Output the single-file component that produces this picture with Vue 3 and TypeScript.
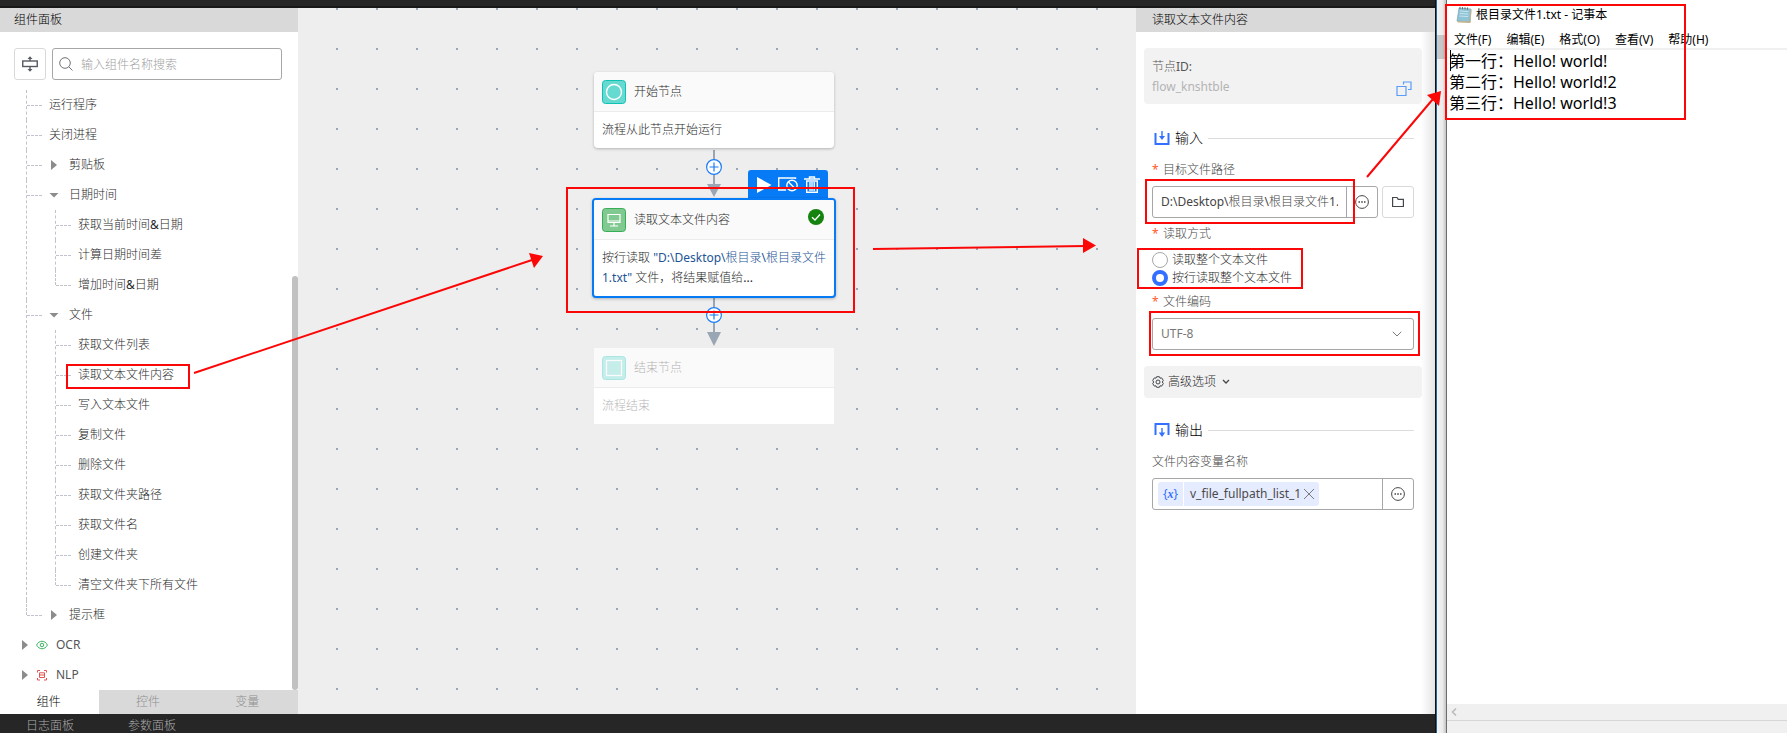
<script setup lang="ts">
import { ref } from 'vue'

interface TreeNode {
  label: string
  open?: boolean
  group?: boolean
  children?: string[]
}

const tree: TreeNode[] = [
  { label: '运行程序' },
  { label: '关闭进程' },
  { label: '剪贴板', group: true },
  { label: '日期时间', group: true, open: true, children: ['获取当前时间&日期', '计算日期时间差', '增加时间&日期'] },
  {
    label: '文件',
    group: true,
    open: true,
    children: ['获取文件列表', '读取文本文件内容', '写入文本文件', '复制文件', '删除文件', '获取文件夹路径', '获取文件名', '创建文件夹', '清空文件夹下所有文件'],
  },
  { label: '提示框', group: true },
]

const tabs = ['组件', '控件', '变量']
const menus = ['文件(F)', '编辑(E)', '格式(O)', '查看(V)', '帮助(H)']

const search = ref('')
const activeTab = ref('组件')
const filePath = ref('D:\\Desktop\\根目录\\根目录文件1.txt')
const readMode = ref('lines')
const encoding = ref('UTF-8')
const notes = ref('第一行：Hello! world!\n第二行：Hello! world!2\n第三行：Hello! world!3')
</script>

<template>
  <div class="screen">
    <div class="studio">
      <div class="topbar"></div>
      <div class="workspace">
        <aside class="sidebar">
          <h2 class="panel-title">组件面板</h2>
          <div class="search-row">
            <button class="square-btn" aria-label="折叠">
              <svg width="16" height="16" viewBox="0 0 16 16" fill="none" stroke="#555a60">
                <rect x="0.75" y="5" width="14.5" height="5.5" stroke-width="1.4" />
                <path d="M8 5V2M8 10.500V14" stroke-width="1.4" />
                <path d="M5.500 3 8 0.300 10.500 3zM5.500 13 8 15.700 10.500 13z" fill="#555a60" stroke="none" />
              </svg>
            </button>
            <label class="search-box">
              <svg width="14" height="14" viewBox="0 0 14 14" fill="none" stroke="#6f7378">
                <circle cx="6" cy="6" r="5.300" />
                <path d="M9.700 9.700 13.500 13.500" />
              </svg>
              <input v-model="search" type="text" placeholder="输入组件名称搜索" aria-label="输入组件名称搜索" />
            </label>
          </div>
          <div class="tree-scroll">
            <div class="tree-body">
              <ul class="tree">
                <li v-for="node in tree" :key="node.label" class="branch">
                  <button class="tree-item">
                    <span v-if="node.group" class="caret" :class="{ open: node.open }"></span>
                    <span>{{ node.label }}</span>
                  </button>
                  <ul v-if="node.children" class="subtree">
                    <li v-for="child in node.children" :key="child" class="branch">
                      <button class="tree-item">{{ child }}</button>
                    </li>
                  </ul>
                </li>
              </ul>
              <button class="root-item">
                <span class="caret"></span>
                <svg width="12" height="12" viewBox="0 0 12 12" fill="none" stroke="#3bb360">
                  <path d="M0.600 6C3 1 9 1 11.400 6 9 11 3 11 0.600 6z" />
                  <circle cx="6" cy="6" r="1.800" />
                </svg>
                <span>OCR</span>
              </button>
              <button class="root-item">
                <span class="caret"></span>
                <svg width="12" height="12" viewBox="0 0 12 12" fill="none" stroke="#e05555">
                  <path d="M1.500 3.500V1.500H4M8 1.500h2.500v2M10.500 9v2H8M4 11H1.500V9M3.500 3.800h5v4.700h-5zM3.500 6h5" />
                </svg>
                <span>NLP</span>
              </button>
            </div>
            <div class="scroll-thumb"></div>
          </div>
          <nav class="tabs">
            <button v-for="tab in tabs" :key="tab" class="tab" :class="{ active: tab === activeTab }" @click="activeTab = tab">{{ tab }}</button>
          </nav>
        </aside>

        <main class="canvas">
          <svg class="dots" width="100%" height="100%">
            <defs>
              <pattern id="dot-grid" x="38" y="0" width="40" height="40" patternUnits="userSpaceOnUse">
                <rect width="2" height="2" fill="#9ba6b4" />
              </pattern>
            </defs>
            <rect width="100%" height="100%" fill="url(#dot-grid)" />
          </svg>
          <svg class="links" width="24" height="350" viewBox="0 0 24 350" fill="none">
            <path d="M12 142V178M12 290V326" stroke="#9ba6b4" stroke-width="2" />
            <path d="M5 176H19L12 189zM5 324H19L12 338z" fill="#9ba6b4" />
            <g stroke="#1a7cf5" stroke-width="1.200">
              <circle cx="12" cy="159" r="7.400" fill="#fff" />
              <circle cx="12" cy="307" r="7.400" fill="#fff" />
              <path d="M7.500 159h9M12 154.500v9M7.500 307h9M12 302.500v9" />
            </g>
          </svg>

          <article class="node start">
            <header>
              <svg width="24" height="24" viewBox="0 0 24 24" fill="none">
                <rect x="0.500" y="0.500" width="23" height="23" rx="3" fill="#66d9d0" stroke="#10c2b3" />
                <circle cx="12" cy="12" r="7.500" stroke="#fff" stroke-width="1.400" />
              </svg>
              <span>开始节点</span>
            </header>
            <p>流程从此节点开始运行</p>
          </article>

          <div class="node-tools">
            <button aria-label="运行">
              <svg width="16" height="18" viewBox="0 0 16 18"><path d="M1 1 15.500 9 1 17z" fill="#fff" /></svg>
            </button>
            <button aria-label="禁用">
              <svg width="20" height="18" viewBox="0 0 20 18" fill="none" stroke="#fff" stroke-width="1.400">
                <path d="M17.500 3V2H0.700v12H8" />
                <circle cx="14" cy="9.500" r="5.200" />
                <path d="M10.500 6 17.500 13" />
              </svg>
            </button>
            <button aria-label="删除">
              <svg width="16" height="18" viewBox="0 0 16 18" fill="none" stroke="#fff" stroke-width="1.400">
                <path d="M0 3H16M5.500 2.500V1h5v1.500M2.700 5V16.300H13.300V5zM6 6v9M8 6v9M10.200 6v9" />
              </svg>
            </button>
          </div>
          <article class="node selected">
            <header>
              <svg width="24" height="24" viewBox="0 0 24 24" fill="none">
                <rect x="0.500" y="0.500" width="23" height="23" rx="3" fill="#80ca92" stroke="#36ad57" />
                <path d="M6 12h12v3H6z" fill="#bfe5c8" />
                <path d="M6 6.500h12v8H6zM12 15v3M8 18h8" stroke="#fff" stroke-width="1.200" />
              </svg>
              <span>读取文本文件内容</span>
              <svg class="done" width="16" height="16" viewBox="0 0 16 16" fill="none">
                <circle cx="8" cy="8" r="8" fill="#15830f" />
                <path d="M4 8.200 7 11 12 5.500" stroke="#fff" stroke-width="1.300" />
              </svg>
            </header>
            <p>按行读取 <em>"D:\Desktop\根目录\根目录文件1.txt"</em> 文件，将结果赋值给...</p>
          </article>

          <article class="node end">
            <header>
              <svg width="24" height="24" viewBox="0 0 24 24" fill="none">
                <rect x="0.500" y="0.500" width="23" height="23" rx="3" fill="#66d9d0" stroke="#10c2b3" />
                <rect x="4.500" y="4.500" width="15" height="15" stroke="#fff" stroke-width="1.200" />
              </svg>
              <span>结束节点</span>
            </header>
            <p>流程结束</p>
          </article>
        </main>

        <aside class="props">
          <h2 class="panel-title">读取文本文件内容</h2>
          <div class="props-body">
            <section class="id-card">
              <div>
                <div class="id-label">节点ID:</div>
                <div class="id-value">flow_knshtble</div>
              </div>
              <button class="copy" aria-label="复制">
                <svg width="16" height="16" viewBox="0 0 16 16" fill="none" stroke="#5b9bfa" stroke-width="1.200">
                  <path d="M1 5.500h9v9H1zM7.500 3.500V1H15v7.500h-3" />
                </svg>
              </button>
            </section>

            <h3 class="section-title">
              <svg width="16" height="16" viewBox="0 0 16 16" fill="none" stroke="#3370ff" stroke-width="2">
                <path d="M1.500 3V14H14.500V3" />
                <path d="M8 1V7" stroke-width="1.400" />
                <path d="M5 6H11L8 10z" fill="#3370ff" stroke="none" />
              </svg>
              <span>输入</span>
            </h3>

            <label class="field-label req" for="path">目标文件路径</label>
            <div class="path-row">
              <div class="combo">
                <input id="path" v-model="filePath" type="text" />
                <button aria-label="更多">
                  <svg width="14" height="14" viewBox="0 0 14 14" fill="none" stroke="#44484c">
                    <circle cx="7" cy="7" r="6.400" /><path d="M3.500 7h1.500M6.200 7h1.600M9 7h1.500" stroke-width="1.500" />
                  </svg>
                </button>
              </div>
              <button class="square-btn" aria-label="选择文件">
                <svg width="12" height="12" viewBox="0 0 12 12" fill="none" stroke="#44484c" stroke-width="1.200">
                  <path d="M0.600 10.500V1.500H5L6.200 3.300H11.400V10.500z" />
                </svg>
              </button>
            </div>

            <div id="mode-label" class="field-label req">读取方式</div>
            <div class="radios" role="radiogroup" aria-labelledby="mode-label">
              <label><input v-model="readMode" type="radio" name="mode" value="all" />读取整个文本文件</label>
              <label><input v-model="readMode" type="radio" name="mode" value="lines" />按行读取整个文本文件</label>
            </div>

            <label class="field-label req enc" for="encoding">文件编码</label>
            <div class="select-box">
              <select id="encoding" v-model="encoding">
                <option>UTF-8</option>
                <option>GBK</option>
              </select>
              <svg width="10" height="6" viewBox="0 0 10 6" fill="none" stroke="#777b80"><path d="M0.800 0.800 5 5 9.200 0.800" /></svg>
            </div>

            <button class="advanced">
              <svg width="12" height="12" viewBox="0 0 12 12" fill="none" stroke="#44484c">
                <path d="M4.600 0.700h2.800L8 2.200 9.700 1.900 11.300 4.400 10.300 6 11.300 7.600 9.700 10.100 8 9.800 7.400 11.300H4.600L4 9.800 2.300 10.100 0.700 7.600 1.700 6 0.700 4.400 2.300 1.900 4 2.200z" />
                <circle cx="6" cy="6" r="2" />
              </svg>
              <span>高级选项</span>
              <svg width="8" height="6" viewBox="0 0 8 6" fill="none" stroke="#44484c" stroke-width="1.300"><path d="M1 1 4 4 7 1" /></svg>
            </button>

            <h3 class="section-title">
              <svg width="16" height="16" viewBox="0 0 16 16" fill="none" stroke="#3370ff" stroke-width="2">
                <path d="M1.500 13V2H14.500V13" />
                <path d="M8 6V12" stroke-width="1.400" />
                <path d="M4.800 10.500H11.200L8 15z" fill="#3370ff" stroke="none" />
              </svg>
              <span>输出</span>
            </h3>

            <div class="field-label">文件内容变量名称</div>
            <div class="combo output">
              <div class="tag-area">
                <span class="tag-kind">{<i>x</i>}</span>
                <span class="tag">v_file_fullpath_list_1
                  <button aria-label="移除">
                    <svg width="12" height="12" viewBox="0 0 12 12" stroke="#777b80"><path d="M1 1 11 11M11 1 1 11" /></svg>
                  </button>
                </span>
              </div>
              <button aria-label="更多">
                <svg width="14" height="14" viewBox="0 0 14 14" fill="none" stroke="#44484c">
                  <circle cx="7" cy="7" r="6.400" /><path d="M3.500 7h1.500M6.200 7h1.600M9 7h1.500" stroke-width="1.500" />
                </svg>
              </button>
            </div>
          </div>
        </aside>
      </div>
      <footer class="bottombar">
        <button>日志面板</button>
        <button>参数面板</button>
      </footer>
    </div>

    <div class="gutter"><span></span></div>

    <section class="notepad">
      <header class="note-title">
        <svg width="16" height="18" viewBox="0 0 16 18">
          <path d="M3 2 15 3 14 16 1 15z" fill="#8fc3d6" stroke="#6b9aab" stroke-width="0.600" />
          <path d="M14.500 3 15.500 4 14.500 17 2 16.500 1 15 13.500 15.500z" fill="#c9b28a" />
          <path d="M4 5 12.500 5.600M3.700 7.500 12.300 8.100M3.500 10 12 10.600" stroke="#c7e5ef" />
          <path d="M4 0.800V3M6.500 1V3.200M9 1.200V3.400M11.500 1.400V3.600" stroke="#4a5a60" stroke-width="0.800" />
        </svg>
        <h1>根目录文件1.txt - 记事本</h1>
      </header>
      <nav class="note-menu">
        <button v-for="item in menus" :key="item">{{ item }}</button>
      </nav>
      <div class="note-body">
        <textarea v-model="notes" aria-label="文本内容" spellcheck="false"></textarea>
        <span class="text-cursor"></span>
      </div>
      <div class="note-scroll">
        <svg width="6" height="8" viewBox="0 0 6 8" fill="none" stroke="#b9b9b9" stroke-width="1.500"><path d="M5 0.500 1.500 4 5 7.500" /></svg>
      </div>
      <div class="note-status"></div>
    </section>

    <svg class="marks" width="1787" height="733" viewBox="0 0 1787 733" fill="none" stroke="#fb0707" stroke-width="2">
      <rect x="67" y="365" width="122" height="23" />
      <rect x="567" y="188" width="287" height="124" />
      <rect x="1146" y="180" width="208" height="43" />
      <rect x="1138" y="249" width="164" height="39" />
      <rect x="1150" y="312" width="269" height="43" />
      <rect x="1446" y="5" width="239" height="114" />
      <path d="M194 373 532 260M873 249 1086 246M1367 177 1433 99" />
      <g fill="#fb0707" stroke="none">
        <path d="M543 256 529 253 534 268z" />
        <path d="M1096 245.500 1083 238 1083 253z" />
        <path d="M1441 91 1427 95 1439 106z" />
      </g>
    </svg>
  </div>
</template>

<style>
body {
  margin: 0;
  overflow: hidden;
}
</style>

<style scoped>
.screen {
  position: relative;
  display: flex;
  height: 100vh;
  overflow: hidden;
  background: #fff;
  color: #2a2a2a;
  font: 12px/20px "Noto Sans", "Noto Sans CJK SC Light", "Noto Sans CJK SC", sans-serif;
}
.screen *,
.screen *::before,
.screen *::after {
  box-sizing: border-box;
}
h1, h2, h3, p, ul {
  margin: 0;
  padding: 0;
  font-weight: 400;
}
ul {
  list-style: none;
}
button, input, select, textarea {
  margin: 0;
  padding: 0;
  border: 0;
  background: none;
  color: inherit;
  font: inherit;
  outline: none;
}
svg {
  display: block;
  flex: none;
}

.studio {
  flex: 1;
  min-width: 0;
  display: flex;
  flex-direction: column;
  border-right: 1px solid #111;
}
.topbar {
  height: 8px;
  background: #262626;
  border-bottom: 2px solid #181818;
}
.workspace {
  flex: 1;
  min-height: 0;
  display: flex;
}
.panel-title {
  height: 24px;
  line-height: 24px;
  background: #d9d9d9;
  color: #000;
  font-size: 12px;
}

.sidebar {
  width: 298px;
  display: flex;
  flex-direction: column;
  background: #fff;
}
.sidebar .panel-title {
  padding-left: 14px;
}
.search-row {
  display: flex;
  gap: 6px;
  padding: 16px 16px 0 14px;
}
.square-btn {
  display: flex;
  align-items: center;
  justify-content: center;
  width: 32px;
  height: 32px;
  border: 1px solid #d9d9d9;
  border-radius: 3px;
}
.search-box {
  flex: 1;
  display: flex;
  align-items: center;
  gap: 8px;
  height: 32px;
  padding: 0 6px;
  border: 1px solid #a6a7a9;
  border-radius: 3px;
}
.search-box input {
  flex: 1;
  min-width: 0;
  padding-top: 1px;
}
.search-box input::placeholder {
  color: #a0a0a0;
}
.tree-scroll {
  flex: 1;
  min-height: 0;
  display: flex;
  align-items: flex-end;
  overflow: hidden;
  padding-top: 10px;
}
.tree-body {
  flex: 1;
  align-self: flex-start;
}
.scroll-thumb {
  width: 6px;
  height: 69%;
  border-radius: 3px;
  background: #c1c1c1;
}
.tree {
  padding-left: 26px;
}
.subtree {
  padding-left: 29px;
}
.branch {
  position: relative;
}
.branch::before {
  content: "";
  position: absolute;
  left: 0;
  top: 0;
  bottom: 0;
  border-left: 1px dashed #bfc3ce;
}
.branch:last-child::before {
  bottom: auto;
  height: 15px;
}
.branch::after {
  content: "";
  position: absolute;
  left: 1px;
  top: 15px;
  width: 15px;
  border-top: 1px dashed #bfc3ce;
}
.tree-item,
.root-item {
  display: flex;
  align-items: center;
  width: 100%;
  height: 30px;
  padding-left: 23px;
  text-align: left;
}
.root-item {
  padding-left: 22px;
  color: #555;
}
.root-item svg {
  margin-right: 8px;
}
.caret {
  width: 6px;
  height: 10px;
  margin: 0 12px 0 2px;
  background: #8c8c8c;
  clip-path: polygon(0 0, 100% 50%, 0 100%);
}
.root-item .caret {
  margin: 0 8px 0 0;
}
.caret.open {
  width: 10px;
  height: 5px;
  margin: 0 10px 0 0;
  clip-path: polygon(0 0, 100% 0, 50% 100%);
}
.tabs {
  display: flex;
  height: 24px;
}
.tab {
  flex: 1;
  padding-right: 2px;
  background: #d9d9d9;
  color: #8f8f8f;
}
.tab.active {
  background: #fff;
  color: #000;
}

.canvas {
  position: relative;
  flex: 1;
  min-width: 0;
  overflow: hidden;
  background: #eee;
}
.dots {
  position: absolute;
  inset: 0;
}
.links {
  position: absolute;
  left: 404px;
  top: 0;
}
.node {
  position: absolute;
  left: 296px;
  width: 240px;
  overflow: hidden;
  background: #fff;
  border-radius: 4px;
  box-shadow: 0 1px 3px rgba(0, 0, 0, 0.25);
}
.node header {
  display: flex;
  align-items: center;
  gap: 8px;
  height: 40px;
  padding: 0 8px;
  background: #fafafa;
  border-bottom: 1px solid #ececec;
}
.node p {
  padding: 8px;
}
.start {
  top: 64px;
}
.selected {
  top: 190px;
  left: 294px;
  width: 244px;
  border: 2px solid #077af5;
}
.selected p {
  padding-right: 4px;
}
.selected em {
  color: #1c5494;
  font-style: normal;
}
.done {
  align-self: flex-start;
  margin: 9px 2px 0 auto;
}
.end {
  top: 340px;
  border-radius: 0;
  box-shadow: none;
}
.end header > *,
.end p {
  opacity: 0.35;
}
.node-tools {
  position: absolute;
  left: 450px;
  top: 162px;
  display: flex;
  align-items: center;
  justify-content: space-between;
  width: 80px;
  height: 30px;
  padding: 0 8px;
  border-radius: 3px 3px 0 0;
  background: #077af5;
}

.props {
  display: flex;
  flex-direction: column;
  width: 299px;
  background: linear-gradient(to left, #e4e4e4, #fff 14px);
}
.props .panel-title {
  padding-left: 16px;
}
.props-body {
  padding: 16px 21px 0 16px;
}
.id-card {
  display: flex;
  justify-content: space-between;
  align-items: flex-end;
  margin: 0 -8px 24px;
  padding: 9px 8px 7px;
  border-radius: 4px;
  background: #f2f2f2;
}
.id-label {
  color: #555;
}
.id-value {
  color: #b4b4b4;
}
.copy {
  margin: 0 2px 0 0;
}
.section-title {
  display: flex;
  align-items: center;
  gap: 5px;
  height: 20px;
  padding-left: 2px;
  color: #000;
  font-size: 14px;
}
.section-title::after {
  content: "";
  flex: 1;
  border-top: 1px solid #dcdcdc;
}
.field-label {
  display: block;
  margin: 12px 0 6px;
  color: #484848;
}
.field-label.req::before {
  content: "*";
  display: inline-block;
  width: 11px;
  color: #ff5a2d;
}
.path-row {
  display: flex;
  gap: 4px;
}
.combo {
  flex: 1;
  min-width: 0;
  display: flex;
  height: 32px;
  border: 1px solid #a6a7a9;
  border-radius: 3px;
}
.combo > input {
  flex: 1;
  min-width: 0;
  margin: 0 8px;
  color: #444;
}
.combo > button {
  display: flex;
  align-items: center;
  justify-content: center;
  width: 31px;
  border-left: 1px solid #a6a7a9;
}
.path-row + .field-label {
  margin: 6px 0;
}
.radios {
  padding: 1px 0;
}
.radios label {
  display: flex;
  align-items: center;
  gap: 4px;
  height: 18px;
}
.radios input {
  appearance: none;
  width: 16px;
  height: 16px;
  border: 1px solid #a6a7a9;
  border-radius: 50%;
  background: #fff;
}
.radios input:checked {
  border: 4px solid #3370ff;
}
.field-label.enc {
  margin: 4px 0 6px;
}
.select-box {
  display: flex;
  align-items: center;
  height: 32px;
  padding-right: 11px;
  border: 1px solid #a6a7a9;
  border-radius: 3px;
}
.select-box select {
  flex: 1;
  height: 30px;
  padding-left: 8px;
  appearance: none;
  color: #777;
}
.advanced {
  display: flex;
  align-items: center;
  gap: 4px;
  width: calc(100% + 16px);
  height: 32px;
  margin: 16px -8px 22px;
  padding: 0 8px;
  border-radius: 4px;
  background: #f2f2f2;
}
.advanced svg:last-child {
  margin-left: 2px;
}
.output {
  background: #fff;
}
.tag-area {
  flex: 1;
  display: flex;
  align-items: center;
  gap: 1px;
  padding-left: 5px;
}
.tag-kind,
.tag {
  display: flex;
  align-items: center;
  height: 24px;
  background: #e6ecff;
}
.tag-kind {
  width: 25px;
  justify-content: center;
  border-radius: 3px 0 0 3px;
  color: #3370ff;
}
.tag-kind i {
  font-family: "Liberation Serif", serif;
  font-weight: 700;
}
.tag {
  gap: 2px;
  padding: 0 4px 0 6px;
  border-radius: 0 3px 3px 0;
  color: #4a4a4a;
}

.bottombar {
  height: 19px;
  display: flex;
  align-items: flex-start;
  gap: 54px;
  padding: 2px 0 0 26px;
  overflow: hidden;
  background: #262626;
  color: #aaa;
}

.gutter {
  width: 11px;
  border-left: 1px solid #2b6494;
  border-right: 1px solid #6d6d6d;
  background: linear-gradient(to right, #f2f2f2, #ececec 60%, #c4c4c4);
  padding-top: 35px;
}
.gutter span {
  display: block;
  height: 24px;
  background: rgba(0, 0, 0, 0.16);
}

.notepad {
  width: 340px;
  display: flex;
  flex-direction: column;
  color: #000;
}
.note-title {
  display: flex;
  align-items: center;
  gap: 4px;
  height: 30px;
  padding-left: 9px;
}
.note-title h1 {
  font-size: 12px;
}
.note-menu {
  display: flex;
  gap: 15px;
  height: 20px;
  padding-left: 7px;
  border-bottom: 2px solid #f0f0f0;
}
.note-title h1,
.note-menu,
.notepad textarea {
  font-family: "Noto Sans", "Noto Sans CJK SC", sans-serif;
}
.note-body {
  position: relative;
  flex: 1;
  display: flex;
}
.notepad textarea {
  flex: 1;
  padding: 1px 2px;
  resize: none;
  overflow: hidden;
  font-size: 16px;
  line-height: 21px;
}
.text-cursor {
  position: absolute;
  left: 3px;
  top: 0;
  width: 1px;
  height: 21px;
  background: #000;
}
.note-scroll {
  display: flex;
  align-items: center;
  height: 16px;
  padding-left: 4px;
  background: #f0f0f0;
}
.note-status {
  height: 13px;
  border-top: 1px solid #d7d7d7;
  background: #f0f0f0;
}

.marks {
  position: absolute;
  left: 0;
  top: 0;
  pointer-events: none;
}
</style>
